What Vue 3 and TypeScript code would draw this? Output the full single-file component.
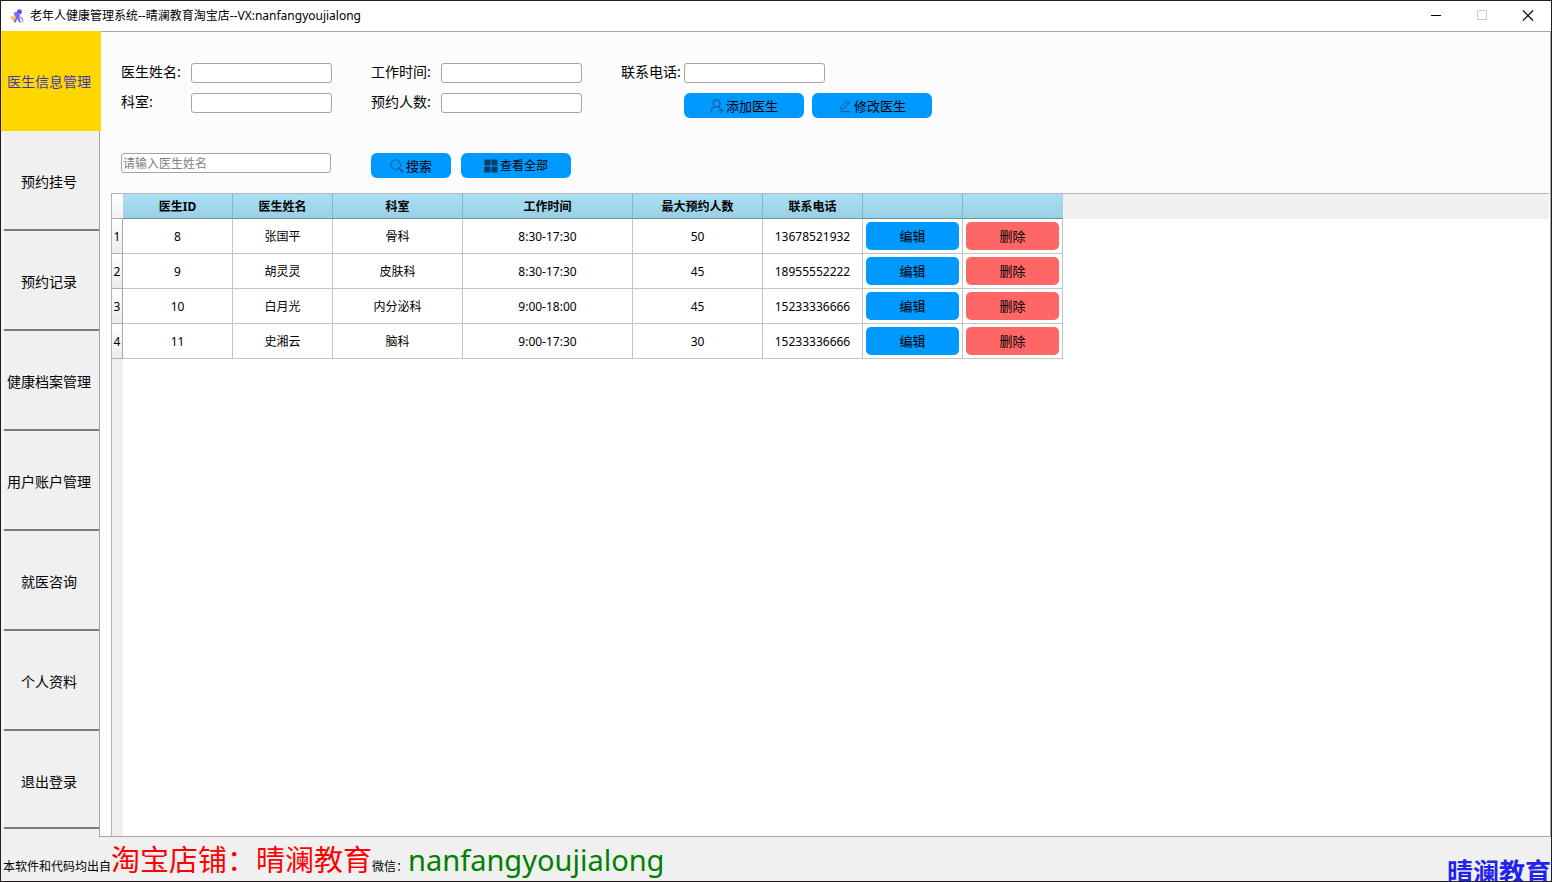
<script setup lang="ts">
import { ref } from 'vue'

interface Doctor {
  id: number
  name: string
  department: string
  hours: string
  capacity: number
  phone: string
}

const menu: string[] = [
  '医生信息管理',
  '预约挂号',
  '预约记录',
  '健康档案管理',
  '用户账户管理',
  '就医咨询',
  '个人资料',
  '退出登录',
]
const current = ref(0)

const doctors: Doctor[] = [
  { id: 8, name: '张国平', department: '骨科', hours: '8:30-17:30', capacity: 50, phone: '13678521932' },
  { id: 9, name: '胡灵灵', department: '皮肤科', hours: '8:30-17:30', capacity: 45, phone: '18955552222' },
  { id: 10, name: '白月光', department: '内分泌科', hours: '9:00-18:00', capacity: 45, phone: '15233336666' },
  { id: 11, name: '史湘云', department: '脑科', hours: '9:00-17:30', capacity: 30, phone: '15233336666' },
]

const headers: string[] = ['医生ID', '医生姓名', '科室', '工作时间', '最大预约人数', '联系电话', '', '']

const form = ref({ name: '', hours: '', phone: '', department: '', capacity: '' })
const keyword = ref('')
</script>

<template>
  <div class="window">
    <header class="titlebar">
      <svg class="logo" viewBox="0 0 14 14" aria-hidden="true">
        <circle cx="9.4" cy="2.7" r="2.5" fill="#6450ee" />
        <path d="M3.600 3.600 7 3 10 5.800 9.400 8.800 11 13.400H9.200L7.400 10 5.400 13.400H3.600L5 8Z" fill="#7a66f0" />
        <path d="M9.800 7 13.200 9.400V13.200H12.200V10.200L9.400 8.600Z" fill="#8f80f2" />
        <path d="M3.200 12 0.600 9.400C-0.200 7.600 1.800 6.200 3.200 7.800 4.600 6.200 6.600 7.600 5.800 9.400Z" fill="#fbc54d" />
      </svg>
      <h1>老年人健康管理系统--晴澜教育淘宝店--VX:nanfangyoujialong</h1>
      <div class="controls">
        <button type="button" aria-label="最小化">
          <svg viewBox="0 0 12 12"><path d="M1 5.500H11" stroke="#000" /></svg>
        </button>
        <button type="button" aria-label="最大化" disabled>
          <svg viewBox="0 0 12 12"><path d="M1.500 0.500H10.500V9.500H1.500Z" stroke="#ccc" fill="none" /></svg>
        </button>
        <button type="button" aria-label="关闭">
          <svg viewBox="0 0 12 12"><path d="M1 0.500 11 10.500M11 0.500 1 10.500" stroke="#000" stroke-width="1.200" /></svg>
        </button>
      </div>
    </header>

    <div class="body">
      <nav class="sidebar">
        <button
          v-for="(item, i) in menu"
          :key="item"
          type="button"
          :class="{ active: i === current }"
          @click="current = i"
        >{{ item }}</button>
      </nav>

      <main class="pane">
        <form class="fields" @submit.prevent>
          <label for="name">医生姓名:</label>
          <input id="name" v-model="form.name" type="text">
          <label for="hours">工作时间:</label>
          <input id="hours" v-model="form.hours" type="text">
          <label for="phone">联系电话:</label>
          <input id="phone" v-model="form.phone" type="text">
          <label for="department">科室:</label>
          <input id="department" v-model="form.department" type="text">
          <label for="capacity">预约人数:</label>
          <input id="capacity" v-model="form.capacity" type="text">
          <div class="actions">
            <button type="button" class="btn wide">
              <svg viewBox="0 0 16 16" fill="none" stroke="#17598f" stroke-width="1.300">
                <circle cx="7.500" cy="5" r="4" />
                <path d="M1 15.500C1.200 11.500 3 9.800 5.500 8.800M9.500 8.800 11.500 10M13 10.500V15.500M10.500 13H15.500" />
              </svg>
              添加医生
            </button>
            <button type="button" class="btn wide">
              <svg viewBox="0 0 16 16" fill="none" stroke="#17598f" stroke-width="1.100">
                <path d="M4 8.500 10.500 1.500 13 4 6.500 11 3.200 12ZM9 3.200 11.400 5.600M2 14.500H14" />
              </svg>
              修改医生
            </button>
          </div>
        </form>

        <form class="search" @submit.prevent>
          <input v-model="keyword" type="text" placeholder="请输入医生姓名" aria-label="医生姓名">
          <button type="submit" class="btn find">
            <svg viewBox="0 0 16 16" fill="none" stroke="#0f4f85" stroke-width="1">
              <circle cx="6.500" cy="6.500" r="5.500" />
              <path d="M10.500 10.500 15 15" stroke-width="1.800" />
            </svg>
            搜索
          </button>
          <button type="button" class="btn all">
            <svg viewBox="0 0 16 16" fill="#0a3c66">
              <rect x="0.500" y="0.500" width="7" height="7" rx="1" />
              <rect x="8.500" y="0.500" width="7" height="7" rx="1" />
              <rect x="0.500" y="8.500" width="7" height="7" rx="1" />
              <rect x="8.500" y="8.500" width="7" height="7" rx="1" />
            </svg>
            查看全部
          </button>
        </form>

        <section class="grid">
          <table>
            <colgroup>
              <col class="c-index">
              <col class="c-id">
              <col class="c-std">
              <col class="c-mid">
              <col class="c-hours">
              <col class="c-mid">
              <col class="c-std">
              <col class="c-std">
              <col class="c-std">
            </colgroup>
            <thead>
              <tr>
                <td class="corner"></td>
                <th v-for="(h, i) in headers" :key="i" scope="col">{{ h }}</th>
              </tr>
            </thead>
            <tbody>
              <tr v-for="(d, i) in doctors" :key="d.id">
                <th scope="row">{{ i + 1 }}</th>
                <td>{{ d.id }}</td>
                <td>{{ d.name }}</td>
                <td>{{ d.department }}</td>
                <td>{{ d.hours }}</td>
                <td>{{ d.capacity }}</td>
                <td>{{ d.phone }}</td>
                <td class="cell-btn"><button type="button" class="edit">编辑</button></td>
                <td class="cell-btn"><button type="button" class="remove">删除</button></td>
              </tr>
            </tbody>
          </table>
        </section>
      </main>
    </div>

    <footer class="footer">
      <p>本软件和代码均出自<span class="shop">淘宝店铺：晴澜教育</span>微信：<span class="wechat">nanfangyoujialong</span></p>
      <strong>晴澜教育</strong>
    </footer>
  </div>
</template>

<style>
body {
  background: #f0f0f0;
}
</style>

<style scoped>
.window {
  box-sizing: border-box;
  display: flex;
  flex-direction: column;
  height: 100vh;
  overflow: hidden;
  border: 1px solid #221e22;
  background: #f0f0f0;
  color: #000;
  font-family: "Noto Sans", "Noto Sans CJK SC", sans-serif;
  font-size: 12px;
  line-height: 16px;
}
button,
input {
  box-sizing: border-box;
  margin: 0;
  padding: 0;
  font: inherit;
  color: inherit;
}
.titlebar {
  display: flex;
  align-items: center;
  height: 30px;
  flex: none;
  padding-left: 9px;
  background: #fff;
}
.logo {
  width: 14px;
  height: 14px;
  margin-right: 6px;
}
h1 {
  margin: 0;
  font-size: 12px;
  font-weight: 400;
}
.controls {
  display: flex;
  margin-left: auto;
}
.controls button {
  display: flex;
  align-items: center;
  justify-content: center;
  width: 46px;
  height: 28px;
  border: 0;
  background: none;
}
.controls svg {
  width: 12px;
  height: 12px;
}
.body {
  display: flex;
  flex: 1;
  min-height: 0;
}
.sidebar {
  display: flex;
  flex-direction: column;
  width: 98px;
  flex: none;
}
.sidebar button {
  height: 100px;
  margin-left: 2px;
  padding: 4px 5px 0 0;
  border: 0;
  border-left: 1px solid #fafafa;
  border-bottom: 2px solid #7c7c7c;
  border-bottom-left-radius: 2px;
  background: #f0f0f0;
  font-size: 14px;
  white-space: nowrap;
}
.sidebar button:last-child {
  height: 98px;
  padding-top: 6px;
}
.sidebar button.active {
  z-index: 1;
  margin: 0 -2px 0 0;
  padding: 2px 4px 0 0;
  border: 0;
  border-radius: 0;
  background: #ffd700;
  color: #3f37b5;
}
.pane {
  display: flex;
  flex: 1;
  flex-direction: column;
  min-width: 0;
  border: 1px solid #a6a6a6;
  background: #fcfcfc;
}
.fields {
  display: grid;
  grid-template-columns: 70px 180px 70px 180px 63px 1fr;
  grid-auto-rows: 20px;
  row-gap: 10px;
  padding: 31px 20px 0 21px;
}
.fields label {
  font-size: 14px;
  line-height: 18px;
  white-space: nowrap;
}
input {
  width: 141px;
  height: 20px;
  border: 1px solid #a5a5a5;
  border-radius: 3px;
  background: #fff;
}
.actions {
  display: flex;
  grid-column: 6;
  gap: 8px;
}
.btn {
  display: flex;
  align-items: center;
  justify-content: center;
  gap: 2px;
  height: 25px;
  flex: none;
  border: 0;
  border-radius: 6px;
  background: #0099ff;
  font-size: 13px;
  white-space: nowrap;
}
.btn svg {
  width: 14px;
  height: 14px;
  flex: none;
}
.wide {
  width: 120px;
}
.search {
  display: flex;
  align-items: flex-start;
  margin: 40px 20px 15px 21px;
}
.search input {
  width: 210px;
  margin-right: 40px;
  padding: 0 1px;
}
.search input::placeholder {
  color: #808080;
  opacity: 1;
}
.find {
  width: 80px;
  margin-right: 10px;
}
.all {
  width: 110px;
  font-size: 12px;
}
.grid {
  flex: 1;
  margin: 0 1px 0 11px;
  border-top: 1px solid #b4b4b4;
  border-left: 1px solid #b4b4b4;
  background:
    linear-gradient(#f0f0f0, #f0f0f0) 0 0 / 100% 25px no-repeat,
    linear-gradient(#f0f0f0, #f0f0f0) 0 0 / 11px 100% no-repeat,
    #fff;
}
table {
  width: 951px;
  table-layout: fixed;
  border-collapse: separate;
  border-spacing: 0;
}
.c-index {
  width: 11px;
}
.c-id {
  width: 110px;
}
.c-std {
  width: 100px;
}
.c-mid {
  width: 130px;
}
.c-hours {
  width: 170px;
}
th,
td {
  box-sizing: border-box;
  padding: 2px 0 0;
  text-align: center;
  white-space: nowrap;
}
thead th {
  height: 25px;
  border-right: 1px solid #84b4c8;
  border-bottom: 1px solid #6a93a4;
  background: linear-gradient(#a9e0f4, #9bcfe3);
  font-weight: 700;
}
thead th:last-child {
  border-right-color: #9fd4e8;
}
.corner {
  border-bottom: 1px solid #b0b0b0;
  background: linear-gradient(#fff, #f0f0f0);
}
tbody th {
  height: 35px;
  border-right: 1px solid #a8a8a8;
  border-bottom: 1px solid #b0b0b0;
  background: linear-gradient(#fff, #ececec);
  font-weight: 400;
}
tbody td {
  border-right: 1px solid #c4c4c4;
  border-bottom: 1px solid #c4c4c4;
  background: #fff;
}
tbody .cell-btn {
  padding: 0 3px;
}
.cell-btn button {
  display: block;
  width: 100%;
  height: 28px;
  border: 0;
  border-radius: 5px;
  font-size: 13px;
}
.edit {
  background: #0099ff;
}
.remove {
  background: #ff6666;
}
.footer {
  display: flex;
  justify-content: space-between;
  height: 44px;
  flex: none;
  overflow: hidden;
}
.footer p {
  margin: 0;
  padding: 3px 0 0 2px;
  line-height: 40px;
  white-space: nowrap;
}
.shop {
  color: #ff0000;
  font-size: 29px;
}
.wechat {
  color: #008000;
  font-size: 29px;
}
.footer strong {
  padding-top: 21px;
  color: #2222ee;
  font-size: 26px;
  line-height: 28px;
  white-space: nowrap;
}
</style>
